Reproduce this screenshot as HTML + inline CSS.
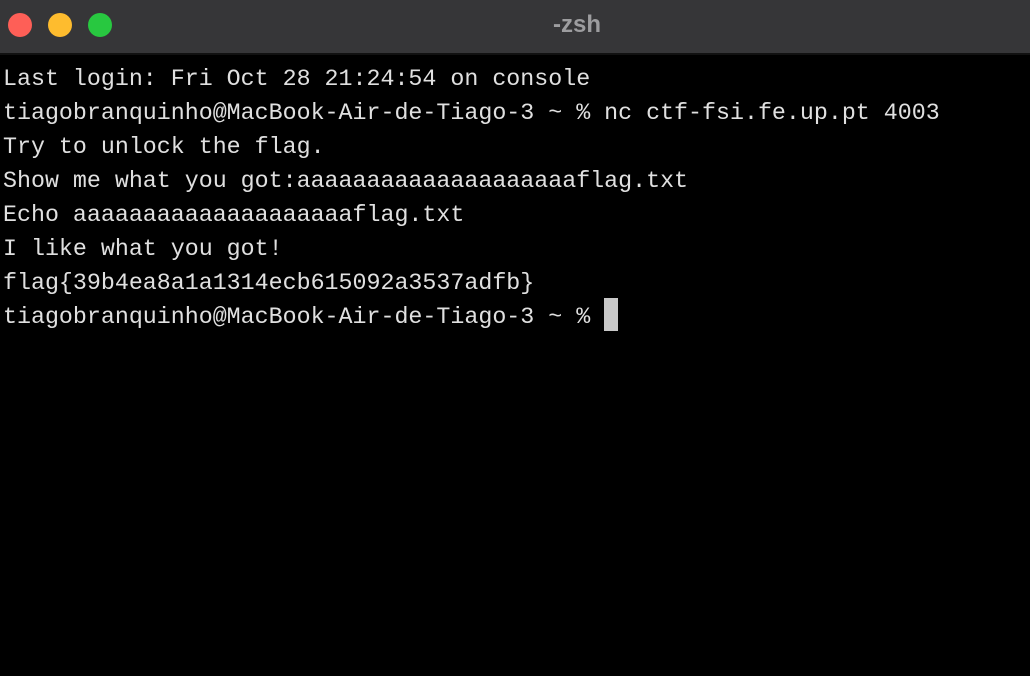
<!DOCTYPE html>
<html><head><style>
body{margin:0;width:1030px;height:676px;background:#000;overflow:hidden;position:relative}
.bar{position:absolute;left:0;top:0;width:1030px;height:53px;background:#363638;border-bottom:2px solid #111}
.c{position:absolute;top:13px;width:24px;height:24px;border-radius:50%}
.t{position:absolute;top:11px;left:0;width:1154px;text-align:center;font:bold 24px "Liberation Sans",sans-serif;color:#9d9d9f}
pre{position:absolute;left:3px;top:62px;margin:0;font:23.3px/34px "Liberation Mono",monospace;color:#e0e0e0}
.cur{position:absolute;left:604px;top:298px;width:14px;height:33px;background:#c8c8c8}
</style></head><body>
<div class="bar">
<div class="c" style="left:8px;background:#fe5f57"></div>
<div class="c" style="left:48px;background:#febc2e"></div>
<div class="c" style="left:88px;background:#28c840"></div>
<div class="t">-zsh</div>
</div>
<pre>Last login: Fri Oct 28 21:24:54 on console
tiagobranquinho@MacBook-Air-de-Tiago-3 ~ % nc ctf-fsi.fe.up.pt 4003
Try to unlock the flag.
Show me what you got:aaaaaaaaaaaaaaaaaaaaflag.txt
Echo aaaaaaaaaaaaaaaaaaaaflag.txt
I like what you got!
flag{39b4ea8a1a1314ecb615092a3537adfb}
tiagobranquinho@MacBook-Air-de-Tiago-3 ~ % </pre>
<div class="cur"></div>
</body></html>
